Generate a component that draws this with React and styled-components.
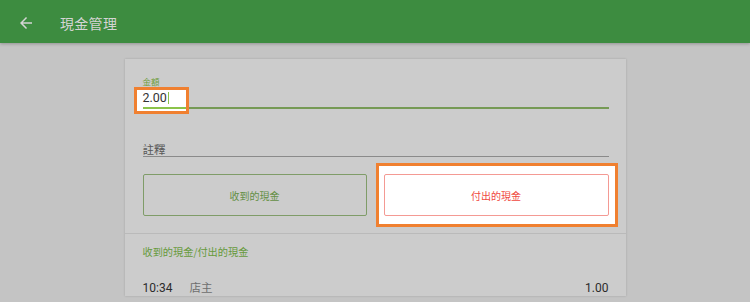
import React from 'react';
import styled, { createGlobalStyle } from 'styled-components';

const GlobalStyle = createGlobalStyle`
  html, body {
    margin: 0;
    padding: 0;
    background: #c4c4c4;
    overflow: hidden;
  }
  body {
    font-family: Roboto, "Noto Sans CJK TC", sans-serif;
  }
`;

const Page = styled.div`
  width: 750px;
  height: 302px;
  background: #c4c4c4;
`;

const Header = styled.header`
  height: 43px;
  padding-top: 3px;
  box-sizing: border-box;
  background: #3d8c40;
  display: flex;
  align-items: center;
  box-shadow: 0 1px 3px rgba(0, 0, 0, 0.25);
  position: relative;
`;

const BackButton = styled.button`
  border: 0;
  background: none;
  padding: 0;
  margin-left: 17px;
  width: 18px;
  height: 18px;
  display: flex;
  color: #d4d4d4;
`;

const Title = styled.h1`
  margin: 0 0 0 25px;
  font-size: 14px;
  font-weight: 400;
  color: #d4d4d4;
  letter-spacing: 0.3px;
`;

const Card = styled.section`
  width: 501px;
  margin: 16px auto 0;
  background: #cccccc;
  box-shadow: 0 0 2px rgba(0, 0, 0, 0.18);
`;

const Form = styled.div`
  padding: 16px 17px 17px 18px;
`;

const Label = styled.div`
  font-size: 8.5px;
  line-height: 12px;
  padding-top: 1px;
  height: 11px;
  color: #6f9c3b;
`;

const InputLine = styled.div`
  height: 20px;
  border-bottom: 2px solid #769a55;
  display: flex;
  align-items: center;
`;

const Value = styled.span`
  position: relative;
  isolation: isolate;
  display: inline-flex;
  align-items: center;
  width: 43px;
  height: 20px;
  padding-top: 1px;
  box-sizing: border-box;
  font-size: 12.5px;
  color: #333;

  &::before {
    content: "";
    position: absolute;
    left: -9px;
    top: 0;
    width: 55px;
    height: 27px;
    box-sizing: border-box;
    border: 3px solid #f08030;
    background: #fff;
    z-index: -1;
  }

  &::after {
    content: "";
    position: absolute;
    left: 0;
    top: 20px;
    width: 43px;
    height: 2px;
    background: #8bc34a;
  }
`;

const Caret = styled.span`
  display: inline-block;
  width: 1px;
  height: 12px;
  margin-left: 1px;
  background: #8bc34a;
`;

const NoteLine = styled.div`
  margin-top: 31px;
  height: 12px;
  padding-top: 4px;
  line-height: 12px;
  border-bottom: 1px solid #8a8a8a;
  font-size: 11.5px;
  color: #595959;
`;

const ButtonRow = styled.div`
  margin-top: 17px;
  display: grid;
  grid-template-columns: 224px 225px;
  column-gap: 17px;
`;

const Spot = styled.div`
  position: relative;
  isolation: isolate;

  &::before {
    content: "";
    position: absolute;
    inset: -11px -9px -11px -8px;
    border: 3px solid #f08030;
    background: #fff;
    z-index: -1;
  }
`;

const CashButton = styled.button`
  width: 100%;
  height: 42px;
  box-sizing: border-box;
  border-radius: 2px;
  border: 1px solid ${p => (p.$out ? '#f49a94' : '#7f9c68')};
  background: ${p => (p.$out ? '#fff' : 'transparent')};
  color: ${p => (p.$out ? '#f0483e' : '#648f45')};
  font-family: "Noto Sans CJK TC", sans-serif;
  font-size: 10px;
  padding: 0;
`;

const Divider = styled.hr`
  margin: 0;
  border: 0;
  border-top: 1px solid #bababa;
`;

const History = styled.div`
  padding: 11px 17px 0 18px;
`;

const SectionTitle = styled.div`
  font-family: "Noto Sans CJK TC", sans-serif;
  font-size: 10.2px;
  line-height: 14px;
  color: #669a3c;
`;

const Row = styled.div`
  margin-top: 21px;
  display: flex;
  align-items: center;
  line-height: 16px;
  font-size: 12px;
  color: #2b2b2b;
`;

const Time = styled.span`
  width: 47px;
`;

const Who = styled.span`
  flex: 1;
  font-size: 11.5px;
  color: #6e6e6e;
`;

const Amount = styled.span``;

export default function App() {
  return (
    <Page>
      <GlobalStyle />
      <Header>
        <BackButton aria-label="back">
          <svg viewBox="0 0 24 24" width="18" height="18" fill="currentColor">
            <path d="M20 11H7.83l5.59-5.59L12 4l-8 8 8 8 1.41-1.41L7.83 13H20v-2z" />
          </svg>
        </BackButton>
        <Title>現金管理</Title>
      </Header>
      <Card>
        <Form>
          <Label>金額</Label>
          <InputLine>
            <Value>
              2.00<Caret />
            </Value>
          </InputLine>
          <NoteLine>註釋</NoteLine>
          <ButtonRow>
            <CashButton>收到的現金</CashButton>
            <Spot>
              <CashButton $out>付出的現金</CashButton>
            </Spot>
          </ButtonRow>
        </Form>
        <Divider />
        <History>
          <SectionTitle>收到的現金/付出的現金</SectionTitle>
          <Row>
            <Time>10:34</Time>
            <Who>店主</Who>
            <Amount>1.00</Amount>
          </Row>
        </History>
      </Card>
    </Page>
  );
}
